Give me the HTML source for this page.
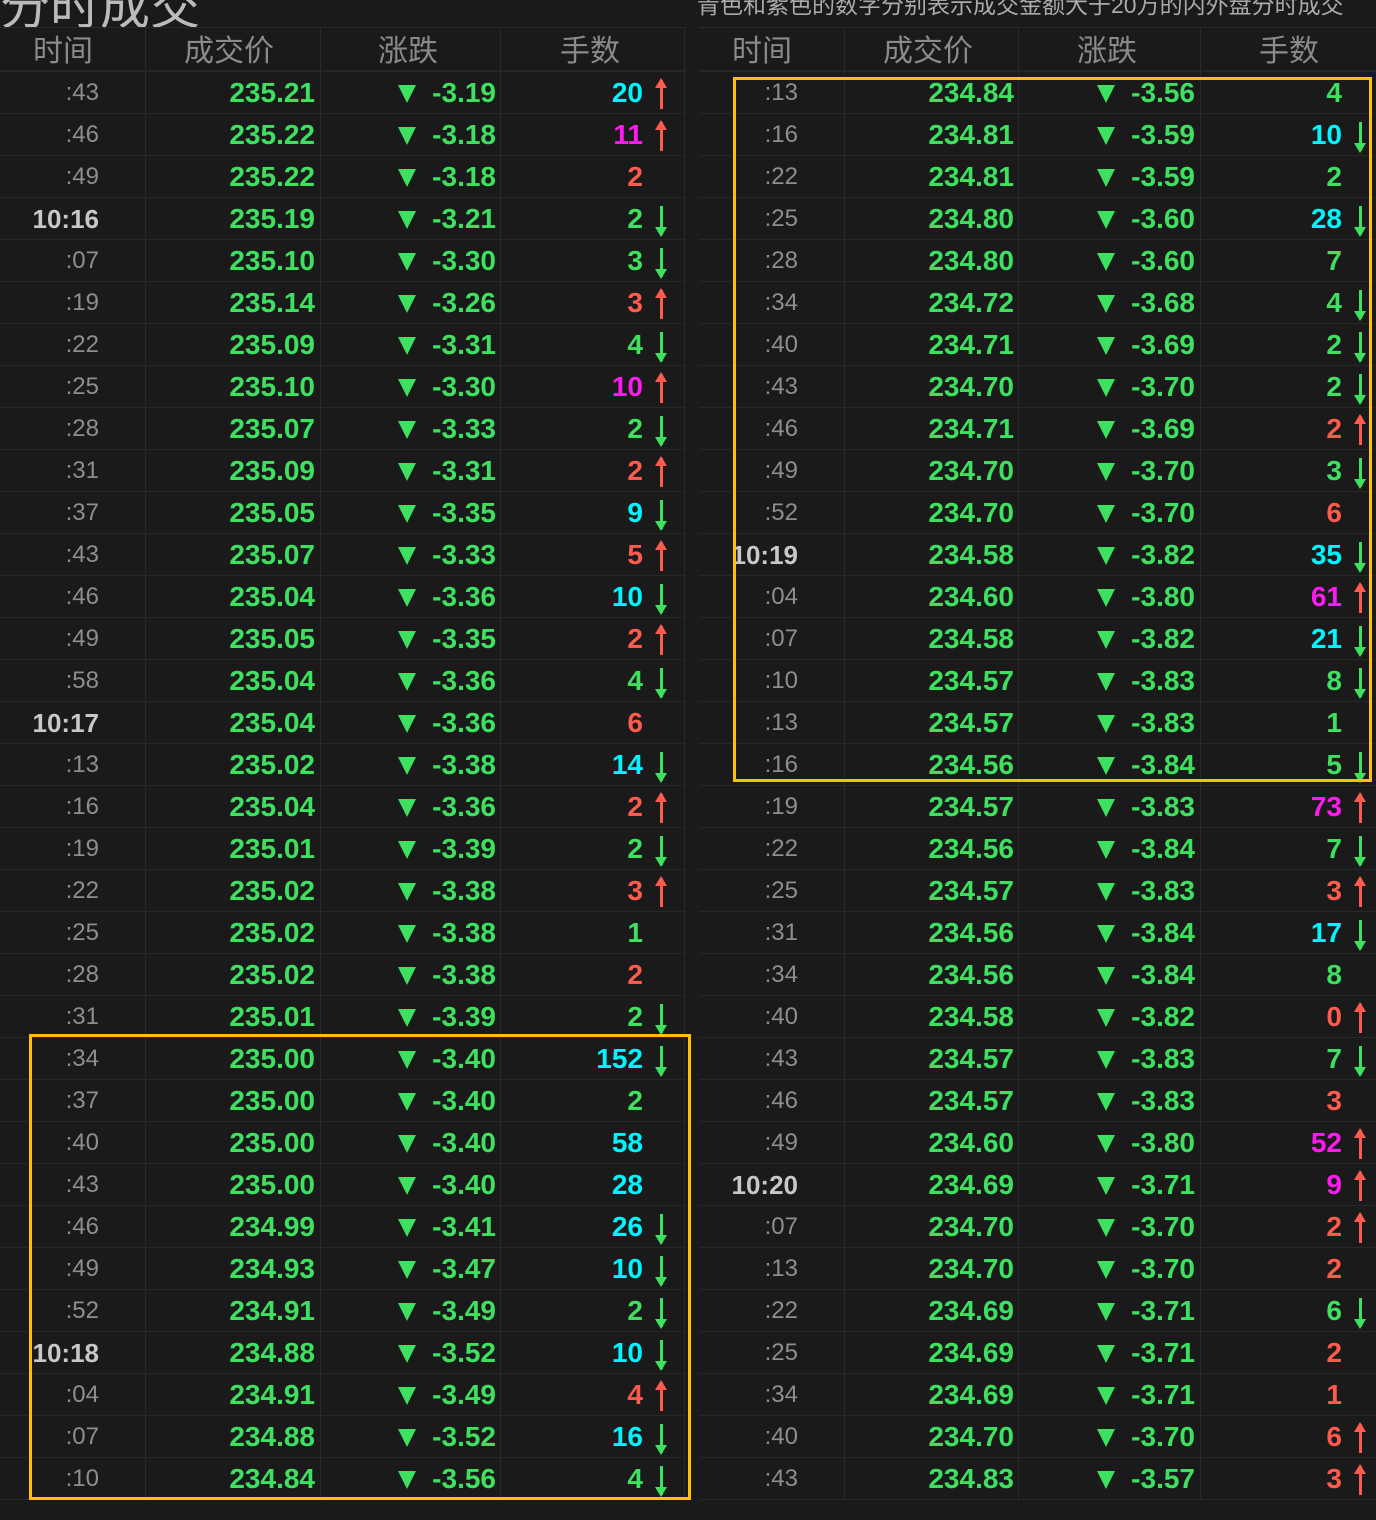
<!DOCTYPE html>
<html><head><meta charset="utf-8"><style>
*{margin:0;padding:0;box-sizing:border-box}
body{width:1376px;height:1520px;background:#1a1a1a;overflow:hidden;position:relative;font-family:"Liberation Sans","Noto Sans CJK SC",sans-serif}
.ttl{position:absolute;left:0;top:-33px;font-size:50px;color:#bbb}
.sub{position:absolute;left:697px;top:-14px;font-size:23px;color:#aaa;white-space:nowrap}
.tb{position:absolute;top:27px;width:686px}
.h{height:45px;border-top:1px solid #2a2a2a;border-bottom:2px solid #262626;position:relative;color:#8a8a8a;font-size:30px}
.h span{position:absolute;top:-2px}
.r{height:42px;border-bottom:1px solid #272727;position:relative;font-weight:bold;font-size:28px;line-height:42px}
.vl{position:absolute;top:0;bottom:0;width:1px;background:#2a2a2a}
.r i{position:absolute;right:587px;font-style:normal;font-weight:normal;font-size:24px;color:#8e8e8e}
.r i.f{font-weight:bold;font-size:26px;color:#c8c8c8}
.r b{position:absolute;right:371px;color:#3ee060}
.r s{position:absolute;left:398px;top:13px;width:0;height:0;border-left:9px solid transparent;border-right:9px solid transparent;border-top:18px solid #3ee060}
.r u{position:absolute;right:190px;text-decoration:none;color:#3ee060}
.r em{position:absolute;right:43px;font-style:normal}
.g{color:#3ee060}.c{color:#00f5ff}.m{color:#ff1af0}.rd{color:#ff5a4e}
.r q{position:absolute;left:660px;top:8px;width:3px;height:29px}
.r q::before{content:"";position:absolute;left:-5px;width:0;height:0;border-left:6.5px solid transparent;border-right:6.5px solid transparent}
.r q.u{background:#ff5a4e}.r q.u::before{top:-2px;border-bottom:10px solid #ff5a4e}
.r q.d{background:#3ee060}.r q.d::before{bottom:-2px;border-top:10px solid #3ee060}
.box{position:absolute;border:3px solid #ffc000}
</style></head><body>
<div class="ttl">分时成交</div>
<div class="sub">青色和紫色的数字分别表示成交金额大于20万的内外盘分时成交</div>

<div class="tb" style="left:0">
<div class="vl" style="left:145px"></div><div class="vl" style="left:320px"></div><div class="vl" style="left:500px"></div><div class="vl" style="left:684px"></div>
<div class="h"><span style="left:33px">时间</span><span style="left:184px">成交价</span><span style="left:378px">涨跌</span><span style="left:560px">手数</span></div>
<div class="r"><i>:43</i><b>235.21</b><s></s><u>-3.19</u><em class="c">20</em><q class="u"></q></div>
<div class="r"><i>:46</i><b>235.22</b><s></s><u>-3.18</u><em class="m">11</em><q class="u"></q></div>
<div class="r"><i>:49</i><b>235.22</b><s></s><u>-3.18</u><em class="rd">2</em></div>
<div class="r"><i class="f">10:16</i><b>235.19</b><s></s><u>-3.21</u><em class="g">2</em><q class="d"></q></div>
<div class="r"><i>:07</i><b>235.10</b><s></s><u>-3.30</u><em class="g">3</em><q class="d"></q></div>
<div class="r"><i>:19</i><b>235.14</b><s></s><u>-3.26</u><em class="rd">3</em><q class="u"></q></div>
<div class="r"><i>:22</i><b>235.09</b><s></s><u>-3.31</u><em class="g">4</em><q class="d"></q></div>
<div class="r"><i>:25</i><b>235.10</b><s></s><u>-3.30</u><em class="m">10</em><q class="u"></q></div>
<div class="r"><i>:28</i><b>235.07</b><s></s><u>-3.33</u><em class="g">2</em><q class="d"></q></div>
<div class="r"><i>:31</i><b>235.09</b><s></s><u>-3.31</u><em class="rd">2</em><q class="u"></q></div>
<div class="r"><i>:37</i><b>235.05</b><s></s><u>-3.35</u><em class="c">9</em><q class="d"></q></div>
<div class="r"><i>:43</i><b>235.07</b><s></s><u>-3.33</u><em class="rd">5</em><q class="u"></q></div>
<div class="r"><i>:46</i><b>235.04</b><s></s><u>-3.36</u><em class="c">10</em><q class="d"></q></div>
<div class="r"><i>:49</i><b>235.05</b><s></s><u>-3.35</u><em class="rd">2</em><q class="u"></q></div>
<div class="r"><i>:58</i><b>235.04</b><s></s><u>-3.36</u><em class="g">4</em><q class="d"></q></div>
<div class="r"><i class="f">10:17</i><b>235.04</b><s></s><u>-3.36</u><em class="rd">6</em></div>
<div class="r"><i>:13</i><b>235.02</b><s></s><u>-3.38</u><em class="c">14</em><q class="d"></q></div>
<div class="r"><i>:16</i><b>235.04</b><s></s><u>-3.36</u><em class="rd">2</em><q class="u"></q></div>
<div class="r"><i>:19</i><b>235.01</b><s></s><u>-3.39</u><em class="g">2</em><q class="d"></q></div>
<div class="r"><i>:22</i><b>235.02</b><s></s><u>-3.38</u><em class="rd">3</em><q class="u"></q></div>
<div class="r"><i>:25</i><b>235.02</b><s></s><u>-3.38</u><em class="g">1</em></div>
<div class="r"><i>:28</i><b>235.02</b><s></s><u>-3.38</u><em class="rd">2</em></div>
<div class="r"><i>:31</i><b>235.01</b><s></s><u>-3.39</u><em class="g">2</em><q class="d"></q></div>
<div class="r"><i>:34</i><b>235.00</b><s></s><u>-3.40</u><em class="c">152</em><q class="d"></q></div>
<div class="r"><i>:37</i><b>235.00</b><s></s><u>-3.40</u><em class="g">2</em></div>
<div class="r"><i>:40</i><b>235.00</b><s></s><u>-3.40</u><em class="c">58</em></div>
<div class="r"><i>:43</i><b>235.00</b><s></s><u>-3.40</u><em class="c">28</em></div>
<div class="r"><i>:46</i><b>234.99</b><s></s><u>-3.41</u><em class="c">26</em><q class="d"></q></div>
<div class="r"><i>:49</i><b>234.93</b><s></s><u>-3.47</u><em class="c">10</em><q class="d"></q></div>
<div class="r"><i>:52</i><b>234.91</b><s></s><u>-3.49</u><em class="g">2</em><q class="d"></q></div>
<div class="r"><i class="f">10:18</i><b>234.88</b><s></s><u>-3.52</u><em class="c">10</em><q class="d"></q></div>
<div class="r"><i>:04</i><b>234.91</b><s></s><u>-3.49</u><em class="rd">4</em><q class="u"></q></div>
<div class="r"><i>:07</i><b>234.88</b><s></s><u>-3.52</u><em class="c">16</em><q class="d"></q></div>
<div class="r"><i>:10</i><b>234.84</b><s></s><u>-3.56</u><em class="g">4</em><q class="d"></q></div>
</div>

<div class="tb" style="left:699px">
<div class="vl" style="left:145px"></div><div class="vl" style="left:319px"></div><div class="vl" style="left:501px"></div>
<div class="h"><span style="left:33px">时间</span><span style="left:184px">成交价</span><span style="left:378px">涨跌</span><span style="left:560px">手数</span></div>
<div class="r"><i>:13</i><b>234.84</b><s></s><u>-3.56</u><em class="g">4</em></div>
<div class="r"><i>:16</i><b>234.81</b><s></s><u>-3.59</u><em class="c">10</em><q class="d"></q></div>
<div class="r"><i>:22</i><b>234.81</b><s></s><u>-3.59</u><em class="g">2</em></div>
<div class="r"><i>:25</i><b>234.80</b><s></s><u>-3.60</u><em class="c">28</em><q class="d"></q></div>
<div class="r"><i>:28</i><b>234.80</b><s></s><u>-3.60</u><em class="g">7</em></div>
<div class="r"><i>:34</i><b>234.72</b><s></s><u>-3.68</u><em class="g">4</em><q class="d"></q></div>
<div class="r"><i>:40</i><b>234.71</b><s></s><u>-3.69</u><em class="g">2</em><q class="d"></q></div>
<div class="r"><i>:43</i><b>234.70</b><s></s><u>-3.70</u><em class="g">2</em><q class="d"></q></div>
<div class="r"><i>:46</i><b>234.71</b><s></s><u>-3.69</u><em class="rd">2</em><q class="u"></q></div>
<div class="r"><i>:49</i><b>234.70</b><s></s><u>-3.70</u><em class="g">3</em><q class="d"></q></div>
<div class="r"><i>:52</i><b>234.70</b><s></s><u>-3.70</u><em class="rd">6</em></div>
<div class="r"><i class="f">10:19</i><b>234.58</b><s></s><u>-3.82</u><em class="c">35</em><q class="d"></q></div>
<div class="r"><i>:04</i><b>234.60</b><s></s><u>-3.80</u><em class="m">61</em><q class="u"></q></div>
<div class="r"><i>:07</i><b>234.58</b><s></s><u>-3.82</u><em class="c">21</em><q class="d"></q></div>
<div class="r"><i>:10</i><b>234.57</b><s></s><u>-3.83</u><em class="g">8</em><q class="d"></q></div>
<div class="r"><i>:13</i><b>234.57</b><s></s><u>-3.83</u><em class="g">1</em></div>
<div class="r"><i>:16</i><b>234.56</b><s></s><u>-3.84</u><em class="g">5</em><q class="d"></q></div>
<div class="r"><i>:19</i><b>234.57</b><s></s><u>-3.83</u><em class="m">73</em><q class="u"></q></div>
<div class="r"><i>:22</i><b>234.56</b><s></s><u>-3.84</u><em class="g">7</em><q class="d"></q></div>
<div class="r"><i>:25</i><b>234.57</b><s></s><u>-3.83</u><em class="rd">3</em><q class="u"></q></div>
<div class="r"><i>:31</i><b>234.56</b><s></s><u>-3.84</u><em class="c">17</em><q class="d"></q></div>
<div class="r"><i>:34</i><b>234.56</b><s></s><u>-3.84</u><em class="g">8</em></div>
<div class="r"><i>:40</i><b>234.58</b><s></s><u>-3.82</u><em class="rd">0</em><q class="u"></q></div>
<div class="r"><i>:43</i><b>234.57</b><s></s><u>-3.83</u><em class="g">7</em><q class="d"></q></div>
<div class="r"><i>:46</i><b>234.57</b><s></s><u>-3.83</u><em class="rd">3</em></div>
<div class="r"><i>:49</i><b>234.60</b><s></s><u>-3.80</u><em class="m">52</em><q class="u"></q></div>
<div class="r"><i class="f">10:20</i><b>234.69</b><s></s><u>-3.71</u><em class="m">9</em><q class="u"></q></div>
<div class="r"><i>:07</i><b>234.70</b><s></s><u>-3.70</u><em class="rd">2</em><q class="u"></q></div>
<div class="r"><i>:13</i><b>234.70</b><s></s><u>-3.70</u><em class="rd">2</em></div>
<div class="r"><i>:22</i><b>234.69</b><s></s><u>-3.71</u><em class="g">6</em><q class="d"></q></div>
<div class="r"><i>:25</i><b>234.69</b><s></s><u>-3.71</u><em class="rd">2</em></div>
<div class="r"><i>:34</i><b>234.69</b><s></s><u>-3.71</u><em class="rd">1</em></div>
<div class="r"><i>:40</i><b>234.70</b><s></s><u>-3.70</u><em class="rd">6</em><q class="u"></q></div>
<div class="r"><i>:43</i><b>234.83</b><s></s><u>-3.57</u><em class="rd">3</em><q class="u"></q></div>
</div>

<div class="box" style="left:733px;top:77px;width:639px;height:705px"></div>
<div class="box" style="left:29px;top:1034px;width:662px;height:466px"></div>
</body></html>
